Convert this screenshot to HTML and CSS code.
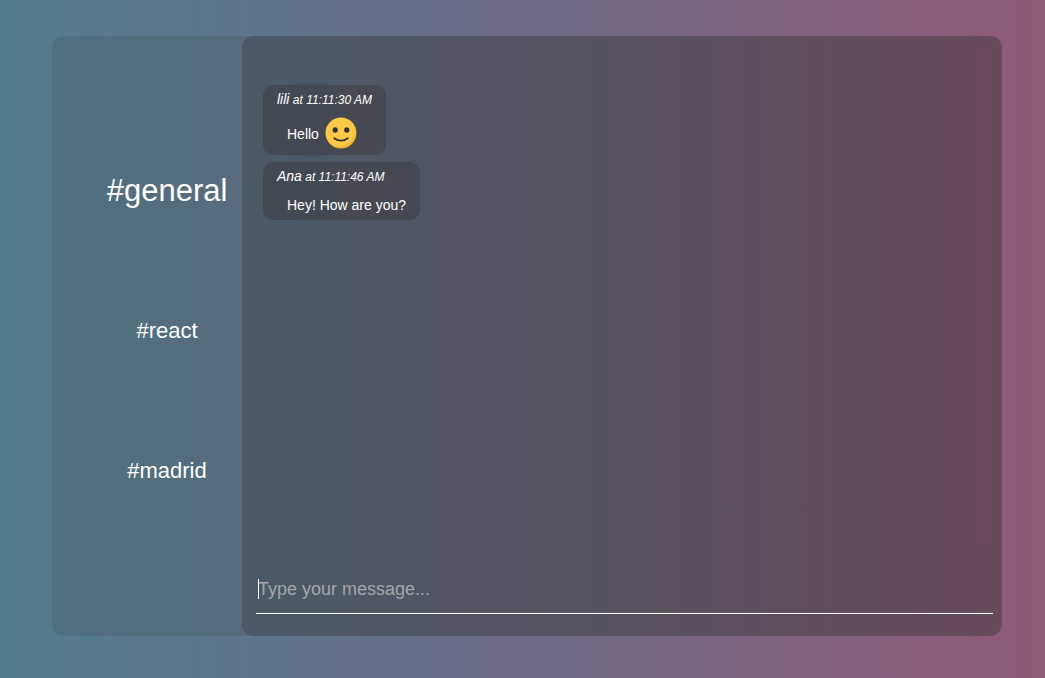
FILE: index.html
```
<!DOCTYPE html>
<html lang="en">
<head>
<meta charset="utf-8">
<meta name="viewport" content="width=device-width, initial-scale=1">
<title>Chat</title>
<link rel="stylesheet" href="styles.css">
</head>
<body>
<main class="app">
  <nav class="channels" aria-label="Channels">
    <a class="channel channel-active" href="#general">#general</a>
    <a class="channel" href="#react">#react</a>
    <a class="channel" href="#madrid">#madrid</a>
  </nav>
  <section class="chat">
    <div class="history">
      <ul class="messages">
        <li class="message">
          <p class="meta"><span class="author">lili</span> at 11:11:30 AM</p>
          <p class="text">Hello
            <svg class="emoji" viewBox="0 0 32 32" role="img" aria-label="smile">
              <defs>
                <radialGradient id="face" cx="0.45" cy="0.42" r="0.58">
                  <stop offset="0.78" stop-color="#fdca47"/>
                  <stop offset="0.92" stop-color="#f7bd35"/>
                  <stop offset="1" stop-color="#e9a820"/>
                </radialGradient>
              </defs>
              <circle cx="16" cy="16" r="15.5" fill="url(#face)"/>
              <ellipse cx="10.2" cy="13" rx="2.6" ry="2.7" fill="#30343a"/>
              <ellipse cx="21.8" cy="13" rx="2.6" ry="2.7" fill="#30343a"/>
              <path d="M9.200 21.200q6.800 5 13.600 0" fill="none" stroke="#30343a" stroke-width="1.800" stroke-linecap="round"/>
            </svg>
          </p>
        </li>
        <li class="message">
          <p class="meta"><span class="author">Ana</span> at 11:11:46 AM</p>
          <p class="text">Hey! How are you?</p>
        </li>
      </ul>
      <div class="scroll-thumb"></div>
    </div>
    <form class="composer">
      <span class="caret"></span>
      <input class="entry" type="text" aria-label="Message" placeholder="Type your message...">
    </form>
  </section>
</main>
</body>
</html>
```
FILE: styles.css
```
* {
  box-sizing: border-box;
}

body {
  margin: 0;
  min-height: 100vh;
  display: flex;
  padding: 36px 43px 42px 52px;
  font-family: "Liberation Sans", Arial, sans-serif;
  color: #fff;
  background: linear-gradient(to right, #527e8e, #686e88 42%, #8f5a76);
}

.app {
  flex: 1;
  display: grid;
  grid-template-columns: 1fr 4fr;
  border-radius: 12px;
  background: rgba(50, 52, 45, 0.15);
}

.channels {
  display: grid;
  grid-auto-rows: 1fr;
  place-items: center;
  padding: 85px 0 95px 40px;
}

.channel {
  color: #fff;
  font-size: 22px;
  text-decoration: none;
}

.channel-active {
  font-size: 31px;
}

.chat {
  display: flex;
  flex-direction: column;
  padding: 14px 9px 22px 14px;
  border-radius: 12px;
  background: rgba(44, 44, 46, 0.27);
}

.history {
  flex: 1;
  display: flex;
  justify-content: space-between;
  padding-right: 4px;
}

.messages {
  display: flex;
  flex-direction: column;
  align-items: flex-start;
  gap: 7px;
  margin: 0;
  padding: 35px 0 0 7px;
  list-style: none;
}

.message {
  padding: 6px 14px 5px;
  border-radius: 10px;
  background: rgba(62, 64, 70, 0.6);
}

.meta {
  margin: 0;
  font-size: 12px;
  font-style: italic;
  line-height: 16px;
}

.author {
  font-size: 14px;
}

.text {
  margin: 10px 0 0 10px;
  font-size: 14px;
  line-height: 20px;
}

.emoji {
  width: 32px;
  height: 32px;
  margin: -1px 2px 1px;
  vertical-align: -11px;
}

.scroll-thumb {
  width: 10px;
  border-radius: 5px;
  background: rgba(130, 68, 108, 0.25);
}

.composer {
  position: relative;
  margin-top: 22px;
}

.entry {
  display: block;
  width: 100%;
  height: 50px;
  padding: 1px 2px 0;
  border: 0;
  border-bottom: 1px solid #fff;
  outline: 0;
  background: none;
  color: #fff;
  font: 18px "Liberation Sans", Arial, sans-serif;
}

.entry::placeholder {
  color: #a4a6ab;
}

.caret {
  position: absolute;
  left: 2px;
  top: 15px;
  width: 1px;
  height: 20px;
  background: #fff;
}
```
